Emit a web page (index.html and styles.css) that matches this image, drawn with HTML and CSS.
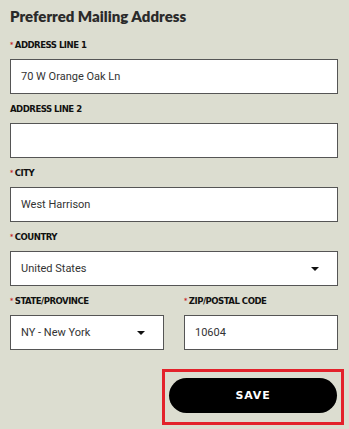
FILE: index.html
```html
<!DOCTYPE html>
<html lang="en">
<head>
  <meta charset="UTF-8" />
  <meta name="viewport" content="width=device-width, initial-scale=1.0"/>
  <title>Preferred Mailing Address</title>
  <link rel="stylesheet" href="styles.css">
</head>
<body>
  <form class="address-form">
    <h2>Preferred Mailing Address</h2>

    <div class="field">
      <label><span class="req">*</span>ADDRESS LINE 1</label>
      <div class="input">70 W Orange Oak Ln</div>
    </div>

    <div class="field">
      <label>ADDRESS LINE 2</label>
      <div class="input"></div>
    </div>

    <div class="field">
      <label><span class="req">*</span>CITY</label>
      <div class="input">West Harrison</div>
    </div>

    <div class="field">
      <label><span class="req">*</span>COUNTRY</label>
      <div class="input select">United States <span class="caret"></span></div>
    </div>

    <div class="field-row">
      <div class="field">
        <label><span class="req">*</span>STATE/PROVINCE</label>
        <div class="input select">NY - New York <span class="caret"></span></div>
      </div>
      <div class="field">
        <label><span class="req">*</span>ZIP/POSTAL CODE</label>
        <div class="input">10604</div>
      </div>
    </div>

    <div class="actions">
      <div class="highlight">
        <button type="button" class="save-btn">SAVE</button>
      </div>
    </div>
  </form>
</body>
</html>
```

FILE: styles.css
```css
body {
  margin: 0;
  background-color: #dcddd0;
  font-family: Roboto, 'Noto Sans', sans-serif;
  color: #333;
}

.address-form {
  padding: 5px 11px 0 10px;
}

.address-form h2 {
  margin: 0 0 11px;
  font-family: Lato, sans-serif;
  font-size: 15px;
  line-height: 22px;
  font-weight: 800;
  color: #2a2a2a;
}

.field {
  margin-bottom: 8px;
}

.field label {
  display: block;
  height: 14px;
  line-height: 14px;
  margin-bottom: 7px;
  font-family: 'DejaVu Sans Condensed', 'DejaVu Sans', sans-serif;
  font-stretch: condensed;
  font-weight: 700;
  font-size: 9.5px;
  color: #111;
  letter-spacing: -0.5px;
}

.req {
  color: #c62c2c;
  font-size: 7px;
  vertical-align: top;
  margin-right: 2px;
}

.input {
  box-sizing: border-box;
  height: 35px;
  background: #fff;
  border: 1px solid #555;
  padding: 0 10px;
  display: flex;
  align-items: center;
  font-size: 11px;
  color: #333;
}

.select {
  justify-content: space-between;
  padding-right: 18px;
}

.caret {
  width: 0;
  height: 0;
  border-left: 4px solid transparent;
  border-right: 4px solid transparent;
  border-top: 4px solid #111;
}

.field-row {
  display: grid;
  grid-template-columns: 1fr 1fr;
  gap: 20px;
}

.actions {
  display: flex;
  justify-content: flex-end;
  margin-top: 11px;
  margin-right: -6px;
}

.highlight {
  border: 3px solid #e3222b;
  padding: 6px 4px 9px 4px;
}

.save-btn {
  display: block;
  width: 168px;
  height: 35px;
  border: none;
  border-radius: 18px;
  background: #000;
  color: #fff;
  font-family: 'DejaVu Sans', sans-serif;
  font-weight: 700;
  font-size: 11px;
  letter-spacing: 0.8px;
  cursor: pointer;
}
```
